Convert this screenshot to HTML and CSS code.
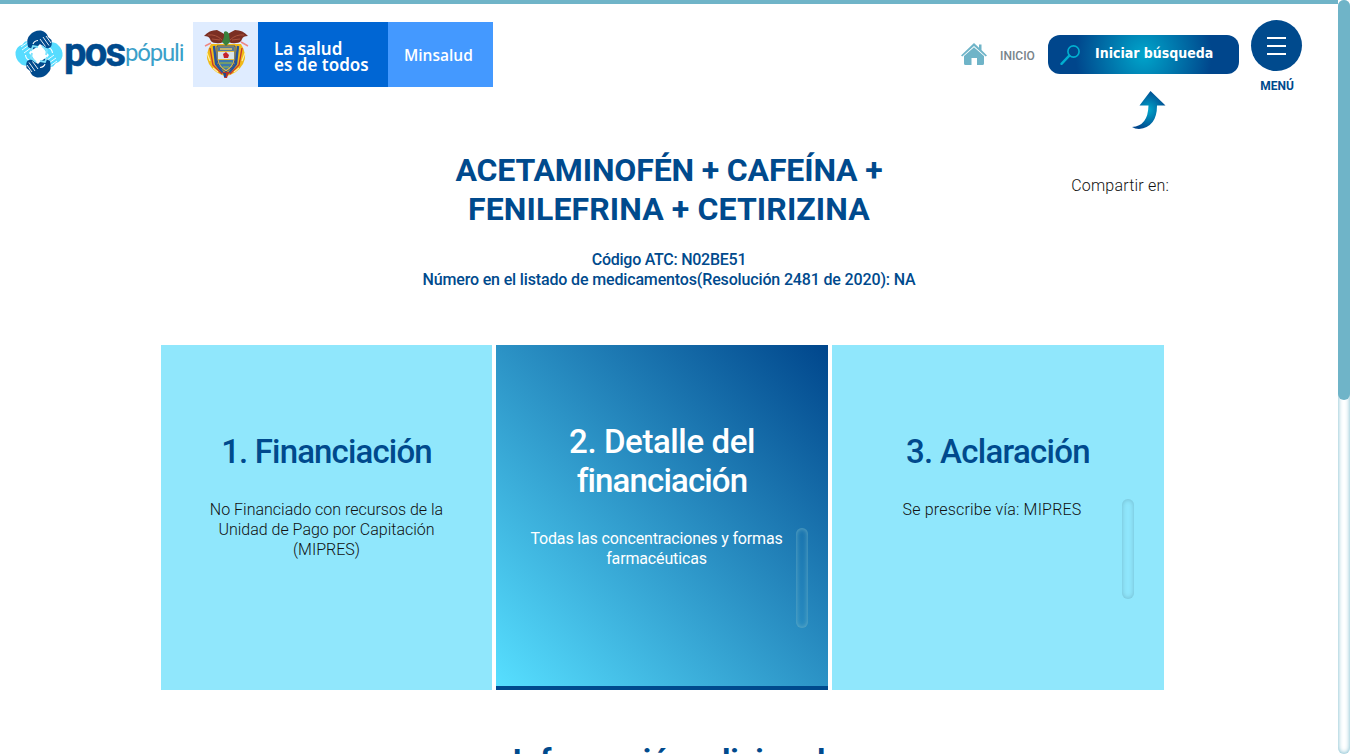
FILE: index.html
```html
<!DOCTYPE html>
<html lang="es">
<head>
<meta charset="utf-8">
<title>POS Pópuli</title>
<link rel="stylesheet" href="styles.css">
</head>
<body>
<div class="page">
  <header class="header">
    <a class="brand">
      <svg class="brand-mark" width="50" height="48" viewBox="-25 -24 50 48">
        <defs>
          <g id="hand">
            <path d="M-11-7Q-13-16-9-19Q-5-24 2-23.500Q8-22 9-17L12.500-14Q13.500-8 11-6.500Q8-5 5-7L1-10L-2-7L-6-4.500Z"/>
            <path d="M4-17L10-8.500M7-18L12-11M1-15L6.500-7.500" fill="none" stroke="#fff" stroke-width=".9"/>
            <path d="M-6-10Q-5-13-1-13.500" fill="none" stroke="#fff" stroke-width="1.100"/>
          </g>
        </defs>
        <g fill="#57dcff"><use href="#hand" transform="rotate(90)"/><use href="#hand" transform="rotate(270)"/></g>
        <g fill="#004a8d"><use href="#hand"/><use href="#hand" transform="rotate(180)"/></g>
        <circle r="6" fill="#fff"/>
        <path d="M-8-3l2-5 5 1M3-8l5 4-1 5M8 3l-2 5-5-1M-3 8l-5-4 1-5" fill="none" stroke="#7fe3fc" stroke-width="1.800"/>
      </svg>
      <span class="brand-pos">pos</span><span class="brand-populi">pópuli</span>
    </a>
    <div class="gov">
      <div class="gov-shield">
        <svg width="46" height="52" viewBox="0 0 46 52">
          <path d="M8 15Q1 26 6 35q6 10 17 12 11-2 17-12 5-9-2-20Z" fill="#f0ba18"/>
          <path d="M11 17l2 18 7 9M35 17l-2 18-7 9" fill="none" stroke="#2353a0" stroke-width="2.400"/>
          <path d="M7 19l3 17 9 9M39 19l-3 17-9 9" fill="none" stroke="#c63a2b" stroke-width="1.400"/>
          <path d="M4 24l3 8M42 24l-3 8M10 39l5 4M36 39l-5 4" stroke="#fff0a0" stroke-width="1.200"/>
          <path d="M14 17h18v14q-1 7-9 12-8-5-9-12Z" fill="#e3bd45" stroke="#24488c"/>
          <path d="M15 18h16v4H15Z" fill="#527a9a"/><path d="M17 20h12" stroke="#e8c760" stroke-width="1.500"/>
          <path d="M15 23h16v7H15Z" fill="#d9e4ea"/><path d="M20 25l3-2 3 3-1 3h-4Z" fill="#c5222b"/>
          <path d="M15.500 31h15q-1 6-7.500 10-6.500-4-7.500-10Z" fill="#3c78ae"/><path d="M17 34h12M20 38h6" stroke="#84a65a" stroke-width="1.500"/>
          <path d="M23 6Q18 3 14 1 6 1 1 7q5 0 6 3 1 4 6 4 4 1 7-1l3 3 3-3q3 2 7 1 5 0 6-4 1-3 6-3-5-6-13-6Q28 3 23 6Z" fill="#7b2f23"/>
          <path d="M5 6q8-1 14 5M41 6q-8-1-14 5M9 10l8 1M37 10l-8 1" fill="none" stroke="#a9523c"/>
          <path d="M21 3q3-2 5 2l1 8-4 4-4-4 2-5Z" fill="#39803d"/>
          <path d="M2 17l6-3M38 13l7 4" stroke="#ef8984" stroke-width="1.500"/>
          <path d="M19 43h8l-2 3-1 3h-3l1-3Z" fill="#b5342a"/><path d="M20 44h3v4h-2Z" fill="#24488c"/>
        </svg>
      </div>
      <div class="gov-slogan">La salud<br>es de todos</div>
      <div class="gov-ministry">Minsalud</div>
    </div>
    <nav class="nav">
      <a class="home">
        <svg width="26" height="22" viewBox="0 0 26 22" fill="#6fb4c8">
          <path d="M0 12.500L13 0l5 4.700V1.500h2.500V7L26 12.500l-1.300 1L13 3 1.300 13.500Z"/>
          <path d="M3 13L13 4.200 23 13v7.500q0 1.500-1.500 1.500H16v-7h-5.500v7h-6Q3 22 3 20.500Z"/>
        </svg>
        <span>INICIO</span>
      </a>
      <div class="search-wrap">
        <a class="search">
          <svg width="20" height="20" viewBox="0 0 20 20" fill="none" stroke="#00b0d0"><circle cx="13.500" cy="6.500" r="5.600" stroke-width="1.600"/><path d="M9.300 10.700L1.500 18.800" stroke-width="2.400" stroke-linecap="round"/></svg>
          <span>Iniciar búsqueda</span>
        </a>
        <svg class="arrow" width="34" height="40" viewBox="0 0 34 40">
          <defs><radialGradient id="ag" cx=".5" cy=".5" r=".55"><stop offset="0" stop-color="#00a5cb"/><stop offset="1" stop-color="#00468c"/></radialGradient></defs>
          <path d="M18.500 1L33.500 15.500H25Q25 37 7 39Q3 39 0 37Q16 36 16.500 15.500H7.500Z" fill="url(#ag)"/>
        </svg>
      </div>
      <div class="menu">
        <div class="menu-button"><svg width="20" height="20" viewBox="0 0 20 20" stroke="#fff" stroke-width="2"><path d="M0 2h19M0 10h19M0 18h19"/></svg></div>
        <span>MENÚ</span>
      </div>
    </nav>
  </header>
  <main class="main">
    <section class="intro">
      <div class="intro-text">
        <h1 class="title"><span class="title-first">ACETAMINOFÉN + CAFEÍNA +</span><br><span>FENILEFRINA + CETIRIZINA</span></h1>
        <p class="meta"><span class="code">Código ATC: N02BE51</span><br><span>Número en el listado de medicamentos(Resolución 2481 de 2020): NA</span></p>
      </div>
      <div class="share">Compartir en:</div>
    </section>
    <section class="cards">
      <article class="card">
        <h2 class="card-title">1. Financiación</h2>
        <div class="card-body"><p class="card-text">No Financiado con recursos de la<br>Unidad de Pago por Capitación<br>(MIPRES)</p></div>
      </article>
      <article class="card card-active">
        <h2 class="card-title"><span class="looser">2. Detalle del</span><br>financiación</h2>
        <div class="card-body has-track"><p class="card-text">Todas las concentraciones y formas<br>farmacéuticas</p><i class="track"></i></div>
      </article>
      <article class="card card-third">
        <h2 class="card-title">3. Aclaración</h2>
        <div class="card-body has-track"><p class="card-text">Se prescribe vía: MIPRES</p><i class="track"></i></div>
      </article>
    </section>
    <h2 class="more">Información adicional</h2>
  </main>
</div>
<div class="scrollbar"><div class="thumb"></div></div>
</body>
</html>
```
FILE: styles.css
```css
* { box-sizing: border-box; }
body { margin: 0; height: 754px; display: flex; overflow: hidden; background: #fff; color: #1c1c1c; font-family: Roboto, "Liberation Sans", sans-serif; }
h1, h2, p { margin: 0; font-weight: inherit; }
.page { width: 1338px; height: 754px; overflow: hidden; border-top: 4px solid #6fb4c8; }
.scrollbar { width: 12px; height: 754px; border-radius: 6px; background: #fff; box-shadow: inset 0 0 5px #6fb4c8; }
.thumb { height: 400px; border-radius: 6px; background: #6fb4c8; }

.header { height: 141px; display: flex; align-items: flex-start; padding: 16px 36px 0 14px; }
.brand { display: flex; width: 179px; height: 60px; padding-top: 10px; white-space: nowrap; }
.brand-mark { flex: none; }
.brand-pos { width: 61px; margin-top: 1px; font: 700 40px/44px Roboto, sans-serif; color: #004a8d; letter-spacing: -1.8px; -webkit-text-stroke: .5px #004a8d; }
.brand-populi { margin-top: 6px; font: 400 24px/34px Roboto, sans-serif; color: #3ba0c9; letter-spacing: -1.2px; }
.gov { display: flex; margin-top: 2px; height: 65px; color: #fff; }
.gov-shield { width: 65px; background: #dfecff; padding: 7px 0 0 10px; }
.gov-slogan { width: 130px; background: #0066d4; padding: 19px 0 0 16px; font: 600 17px/16px "Noto Sans", sans-serif; white-space: nowrap; }
.gov-ministry { width: 105px; background: #4499ff; padding-left: 16px; font: 600 15.5px/66px "Open Sans", sans-serif; }
.nav { display: flex; margin-left: auto; }
.home { display: flex; padding-top: 23px; width: 87px; gap: 13px; font-size: 12px; line-height: 26px; font-weight: 500; color: #77838a; white-space: nowrap; }
.search-wrap { width: 203px; padding-top: 15px; }
.search { display: flex; width: 191px; height: 39px; padding: 10px 12px; gap: 15px; border-radius: 12px; background: radial-gradient(circle, #00a5cb 0%, #00468c 70%); color: #fff; font: 700 14px/17px "DejaVu Sans Condensed", "DejaVu Sans", sans-serif; font-stretch: condensed; white-space: nowrap; }
.arrow { display: block; margin: 16px 0 0 84px; }
.menu { width: 51px; text-align: center; font-size: 12px; line-height: 16px; font-weight: 700; color: #004a8d; }
.menu span { padding-left: 1px; }
.menu-button { display: flex; align-items: center; justify-content: center; height: 51px; border-radius: 50%; background: #004a8d; margin-bottom: 7px; }

.intro { display: grid; grid-template-columns: 161px 1016px 161px; height: 200px; }
.intro-text { grid-column: 2; grid-row: 1; padding-top: 6px; text-align: center; color: #004a8d; white-space: nowrap; }
.title { font-size: 32px; line-height: 39px; font-weight: 700; letter-spacing: .1px; }
.title-first { letter-spacing: -.15px; }
.meta { margin-top: 21px; font-size: 16px; line-height: 20px; font-weight: 500; letter-spacing: -.15px; }
.code { letter-spacing: -.26px; }
.share { grid-column: 2; grid-row: 1; justify-self: end; margin-right: 8px; padding-top: 31px; font-size: 16px; line-height: 20px; font-weight: 300; letter-spacing: .2px; color: #111; }
.cards { display: flex; gap: 4px; margin-left: 161px; height: 345px; }
.card { width: 331px; background: #90e7fc; text-align: center; padding-top: 87px; }
.card + .card { width: 332px; }
.card-title { font-size: 33px; line-height: 39px; font-weight: 500; letter-spacing: -.85px; color: #004a8d; }
.looser { letter-spacing: -.4px; }
.card-body { margin-top: 28px; }
.card-text { padding-top: 1px; font-size: 16px; line-height: 20px; font-weight: 300; white-space: nowrap; color: #111; }
.card-active { padding-top: 77px; border-bottom: 4px solid #004a8d; background: linear-gradient(to top right, #57dfff, #00468c); }
.card-active .card-title, .card-active .card-text { color: #fff; }
.card-active .card-text { font-weight: 400; letter-spacing: -.15px; }
.has-track { display: flex; justify-content: space-between; }
.has-track .card-text { flex: 1; padding-left: 21px; }
.card-third .card-title { letter-spacing: -.7px; }
.card-third .card-text { padding-left: 30px; letter-spacing: .2px; }
.track { width: 12px; height: 100px; margin-right: 20px; border-radius: 6px; box-shadow: inset 0 0 5px rgba(111, 180, 200, .9); }
.card-third .track { margin-right: 30px; }
.more { margin-top: 51px; text-align: center; font-size: 32px; line-height: 39px; font-weight: 700; color: #004a8d; }
```
